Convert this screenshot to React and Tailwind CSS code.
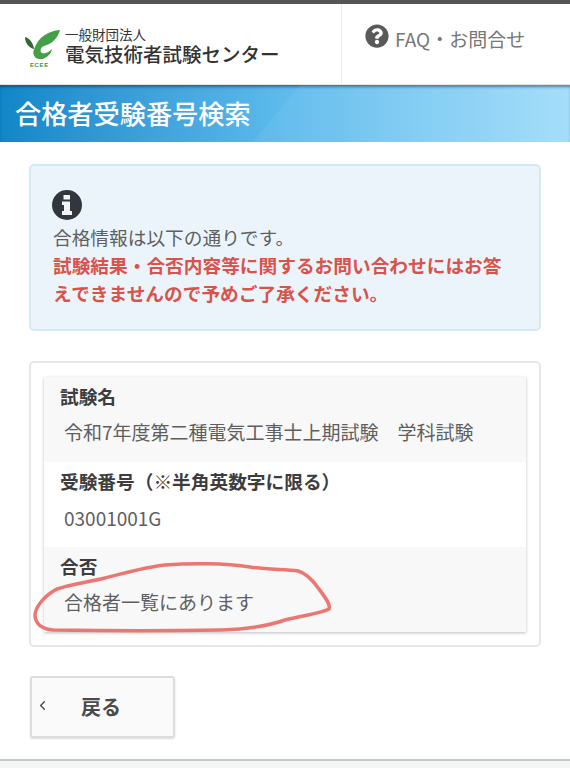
import React from "react";
import { FaQuestionCircle } from "react-icons/fa";
import { FiChevronLeft } from "react-icons/fi";

const font = { fontFamily: '"Noto Sans CJK JP", "Noto Sans", sans-serif' };

function Logo() {
  return (
    <svg width="38" height="40" viewBox="0 0 38 40">
      <path d="M2 10 C6 11 10 15 11 22 C6 21 2 16 2 10 Z" fill="#2f6b2c" />
      <path
        d="M12 20 C16 10 25 4 37 3 C35 11 29 17 21 19 C18 20 17 23 18 25 C20 28 25 26 29 22 C28 28 22 33 16 32 C10 31 9 25 12 20 Z"
        fill="#43a047"
      />
      <text x="7" y="40" fontSize="6" fontWeight="700" fill="#3f9142" fontFamily="Liberation Sans" letterSpacing="0.6">
        ECEE
      </text>
    </svg>
  );
}

function InfoIcon() {
  return (
    <svg width="30" height="30" viewBox="0 0 30 30" className="-ml-[1px]">
      <circle cx="15" cy="15" r="15" fill="#31373d" />
      <path
        d="M11.5 5 H18 V9.5 H11.5 Z M10 11.5 H18 V21 H20 V25 H10 V21 H12 V15 H10 Z"
        fill="#f2f5f7"
      />
    </svg>
  );
}

function Row({ label, value, shaded, pad }) {
  return (
    <div className={`h-[85px] px-4 pt-[6px] ${shaded ? "bg-[#f8f8f8]" : "bg-white"}`}>
      <div className="text-[18.7px] leading-[26px] font-bold text-[#3d3d3d]">{label}</div>
      <div className={`${pad} pl-[4px] text-[19px] leading-[26px] text-[#5f5f5f]`}>{value}</div>
    </div>
  );
}

export default function App() {
  return (
    <div className="relative w-[570px] h-[768px] overflow-hidden bg-white" style={font}>
      <div className="h-[4px] bg-[#555555]" />

      {/* header */}
      <header className="flex h-[81px] border-b border-[#e4e4e4]">
        <div className="flex w-[341px] items-start pl-[23px] pt-[23px] gap-[4px]">
          <Logo />
          <div>
            <div className="text-[13.5px] leading-[14px] text-[#333333]">一般財団法人</div>
            <div className="text-[19.5px] leading-[25px] font-medium text-[#333333] whitespace-nowrap">
              電気技術者試験センター
            </div>
          </div>
        </div>
        <div className="flex flex-1 items-start border-l border-[#ececec] pl-[23px] pt-[19px]">
          <FaQuestionCircle className="text-[#5a5a5a] mt-[1px]" size={24} />
          <span className="ml-[6px] mt-[2px] text-[19px] leading-[28px] text-[#777777] whitespace-nowrap">
            FAQ・お問合せ
          </span>
        </div>
      </header>

      {/* title band */}
      <div className="relative h-[57px] overflow-hidden bg-gradient-to-r from-[#0f86c8] via-[#5dbbec] to-[#a0dcfa] shadow-[inset_0_3px_3px_-1px_rgba(0,50,80,0.55)] flex items-center pl-[15px]">
        <div className="absolute inset-y-0 left-[253px] right-0 bg-white/5 [clip-path:polygon(47px_0,100%_0,100%_100%,0_100%)]" />
        <h1 className="relative text-[26.2px] font-medium text-white whitespace-nowrap leading-none">合格者受験番号検索</h1>
      </div>

      <main className="px-[29px] pt-[22px]">
        {/* notice */}
        <div className="h-[167px] rounded-[5px] border-2 border-[#d5e9f3] bg-[#ebf4fb] pl-[22px] pt-[24px]">
          <InfoIcon />
          <p className="text-[18.7px] leading-[28px] text-[#5f5f5f] mt-[3px]">合格情報は以下の通りです。</p>
          <p className="w-[455px] text-[18.7px] leading-[28px] font-bold text-[#d9534a]">
            試験結果・合否内容等に関するお問い合わせにはお答えできませんので予めご了承ください。
          </p>
        </div>

        {/* result card */}
        <div className="mt-[30px] h-[286px] rounded-[5px] border-2 border-[#e6e6e6] bg-white px-[13px] pt-[14px]">
          <div className="shadow-[0_1px_3px_rgba(0,0,0,0.25)]">
            <Row label="試験名" value="令和7年度第二種電気工事士上期試験　学科試験" shaded pad="mt-[10px]" />
            <Row label="受験番号（※半角英数字に限る）" value="03001001G" pad="mt-[11px]" />
            <Row label="合否" value="合格者一覧にあります" shaded pad="mt-[10px]" />
          </div>
        </div>

        {/* back */}
        <button className="relative mt-[29px] ml-[1px] flex h-[62px] w-[145px] items-center rounded-[3px] border-2 border-[#dddddd] bg-[#fafafa] shadow-[0_1px_2px_rgba(0,0,0,0.15)]">
          <FiChevronLeft className="ml-[3px] mb-[3px] text-[#444444]" size={15} strokeWidth={2} />
          <span className="ml-[31px] mb-[1px] text-[20px] font-bold text-[#4a4a4a]">戻る</span>
        </button>
      </main>

      {/* hand-drawn circle over the result */}
      <svg className="absolute left-0 top-0 pointer-events-none" width="570" height="768">
        <path
          d="M53 630 C110 631 170 631 222 630 C250 629 268 626 285 620 C305 615 322 613 329 609 C331 604 324 596 319 589 C312 579 306 573 298 571 C285 569 268 570 250 567 C225 563 190 563 165 565 C145 567 125 573 105 578 C85 583 65 585 55 590 C42 598 35 608 35 616 C36 624 42 629 53 630 Z"
          fill="none"
          stroke="#ec7672"
          strokeWidth="3.5"
        />
      </svg>

      {/* bottom edge */}
      <div className="absolute inset-x-0 bottom-0 h-[9px] bg-[#f4f5f5] border-t-2 border-[#c6c8c8]" />
    </div>
  );
}
